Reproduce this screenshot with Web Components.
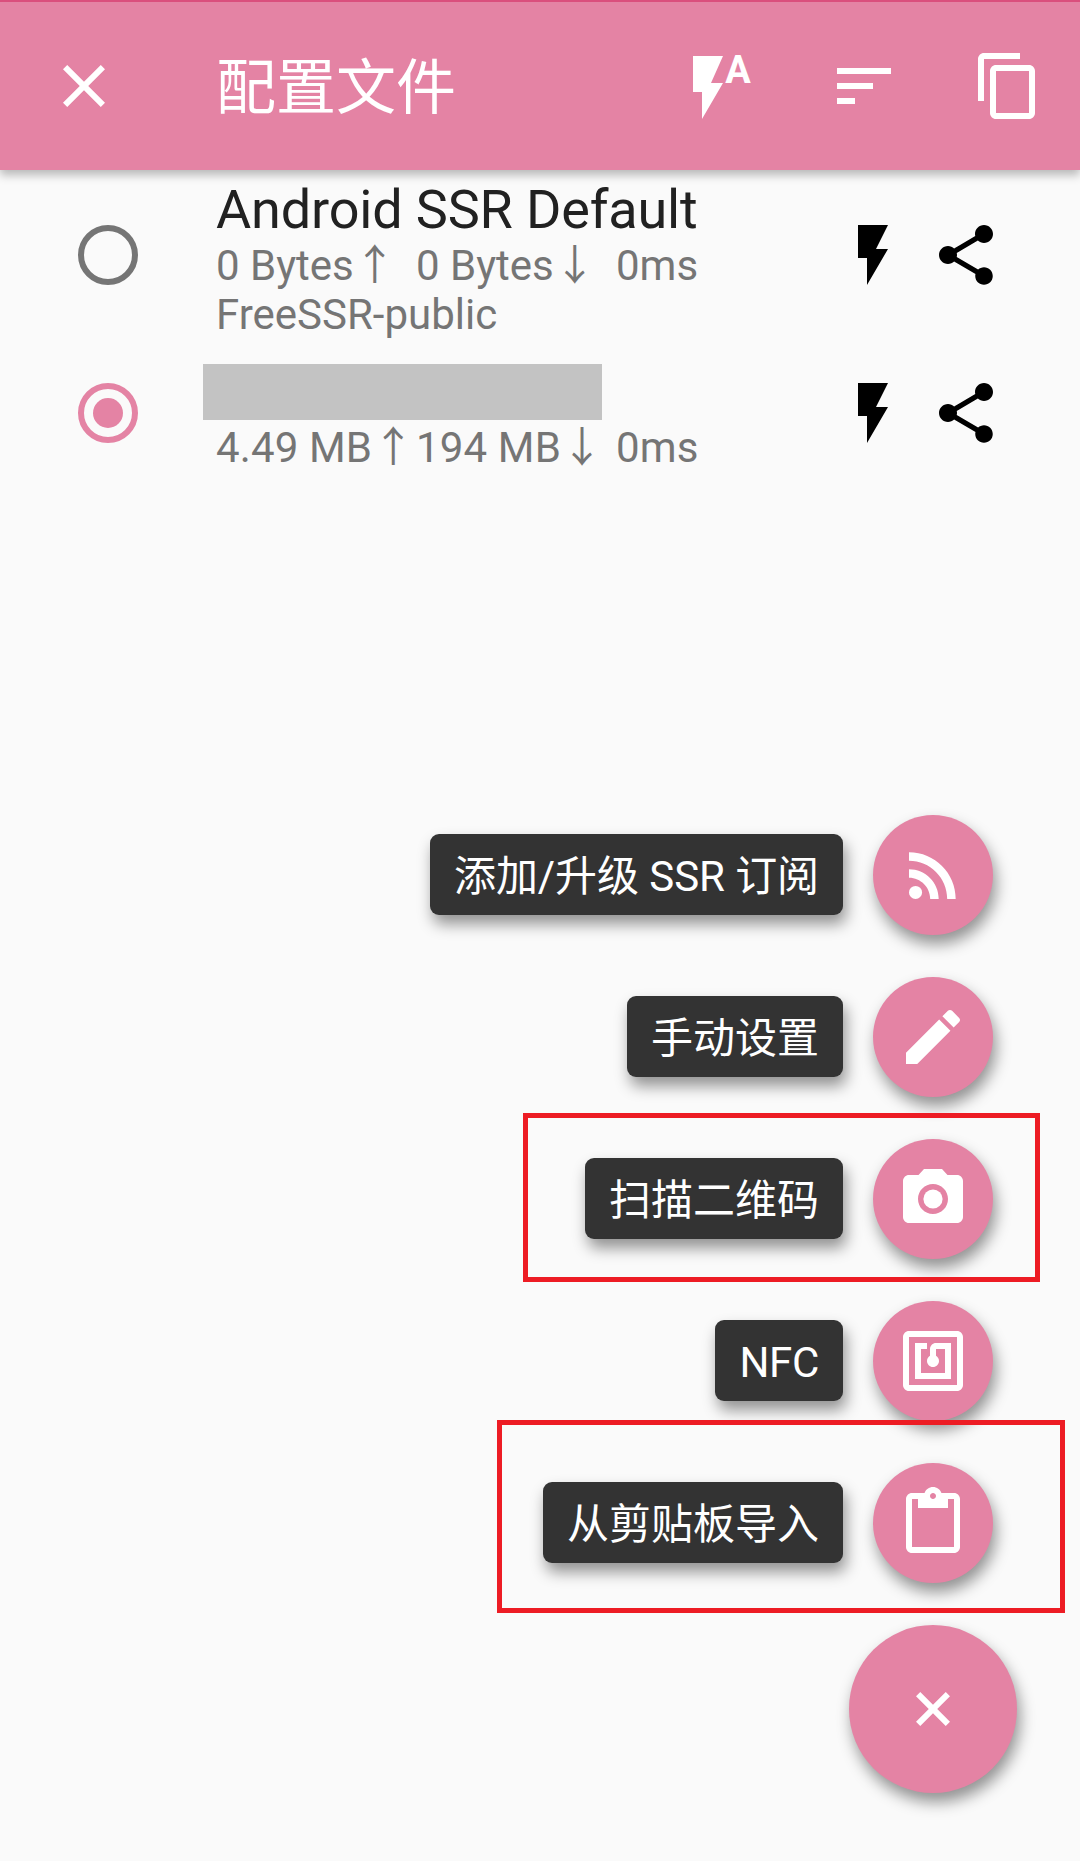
<!DOCTYPE html>
<html lang="zh-CN">
<head>
<meta charset="utf-8">
<title>配置文件</title>
<style>
html, body { margin: 0; padding: 0; }
body { background: #fafafa; font-family: Roboto, "Noto Sans CJK SC", sans-serif; overflow: hidden; }
</style>
</head>
<body>
<profile-screen></profile-screen>
<script>
const ICONS = {
  close: '<path d="M19 6.41 17.59 5 12 10.59 6.41 5 5 6.41 10.59 12 5 17.59 6.41 19 12 13.41 17.59 19 19 17.59 13.41 12z"/>',
  flashAuto: '<path d="M3 2v12h3v9l7-12H9l4-9z"/><text x="18" y="11" text-anchor="middle" font-family="Roboto" font-weight="700" font-size="12.66">A</text>',
  sort: '<path d="M3 18h6v-2H3v2zM3 6v2h18V6H3zm0 7h12v-2H3v2z"/>',
  copy: '<path d="M16 1H4c-1.1 0-2 .9-2 2v14h2V3h12V1zm3 4H8c-1.1 0-2 .9-2 2v14c0 1.1.9 2 2 2h11c1.1 0 2-.9 2-2V7c0-1.1-.9-2-2-2zm0 16H8V7h11v14z"/>',
  flash: '<path d="M7 2v11h3v9l7-12h-4l4-8z"/>',
  share: '<path d="M18 16.08c-.76 0-1.44.3-1.96.77L8.91 12.7c.05-.23.09-.46.09-.7s-.04-.47-.09-.7l7.05-4.11c.54.5 1.25.81 2.04.81 1.66 0 3-1.34 3-3s-1.34-3-3-3-3 1.34-3 3c0 .24.04.47.09.7L8.04 9.81C7.5 9.31 6.79 9 6 9c-1.66 0-3 1.34-3 3s1.34 3 3 3c.79 0 1.5-.31 2.04-.81l7.12 4.16c-.05.21-.08.43-.08.65 0 1.61 1.31 2.92 2.92 2.92s2.92-1.31 2.92-2.92-1.31-2.92-2.92-2.92z"/>',
  rss: '<circle cx="6.18" cy="17.82" r="2.18"/><path d="M4 4.44v2.83c7.03 0 12.73 5.7 12.73 12.73h2.83c0-8.59-6.97-15.56-15.56-15.56zm0 5.66v2.83c3.9 0 7.07 3.17 7.07 7.07h2.83c0-5.47-4.43-9.9-9.9-9.9z"/>',
  edit: '<path d="M3 17.25V21h3.75L17.81 9.94l-3.75-3.75L3 17.25zM20.71 7.04c.39-.39.39-1.02 0-1.41l-2.34-2.34c-.39-.39-1.02-.39-1.41 0l-1.83 1.83 3.75 3.75 1.83-1.83z"/>',
  camera: '<circle cx="12" cy="12" r="3.2"/><path d="M9 2 7.17 4H4c-1.1 0-2 .9-2 2v12c0 1.1.9 2 2 2h16c1.1 0 2-.9 2-2V6c0-1.1-.9-2-2-2h-3.17L15 2H9zm3 15c-2.76 0-5-2.24-5-5s2.24-5 5-5 5 2.24 5 5-2.24 5-5 5z"/>',
  nfc: '<path d="M20 2H4c-1.1 0-2 .9-2 2v16c0 1.1.9 2 2 2h16c1.1 0 2-.9 2-2V4c0-1.1-.9-2-2-2zm0 18H4V4h16v16zM18 6h-5c-1.1 0-2 .9-2 2v2.28c-.6.35-1 .98-1 1.72 0 1.1.9 2 2 2s2-.9 2-2c0-.74-.4-1.38-1-1.72V8h3v8H8V8h2V6H6v12h12V6z"/>',
  paste: '<path d="M19 2h-4.18C14.4.84 13.3 0 12 0c-1.3 0-2.4.84-2.82 2H5c-1.1 0-2 .9-2 2v16c0 1.1.9 2 2 2h14c1.1 0 2-.9 2-2V4c0-1.1-.9-2-2-2zm-7 0c.55 0 1 .45 1 1s-.45 1-1 1-1-.45-1-1 .45-1 1-1zm7 18H5V4h2v3h10V4h2v16z"/>',
  plusTurned: '<path transform="rotate(45 12 12)" d="M11 5h2v6h6v2h-6v6h-2v-6H5v-2h6z"/>'
};

function define(name, render) {
  customElements.define(name, class extends HTMLElement {
    constructor() { super(); this.attachShadow({ mode: 'open' }); }
    connectedCallback() { this.shadowRoot.innerHTML = render(this); }
  });
}

define('md-icon', el => `
  <style>
    :host { display: block; width: 72px; height: 72px; flex: none; }
    svg { display: block; width: 100%; height: 100%; fill: currentColor; overflow: visible; }
  </style>
  <svg viewBox="0 0 24 24" aria-hidden="true">${ICONS[el.getAttribute('name')]}</svg>`);

define('app-toolbar', () => `
  <style>
    :host { display: flex; align-items: center; box-sizing: border-box; height: 170px; padding: 0 36px 0 48px;
      border-top: 2px solid #da4f7d; background: #e483a4; color: #fff; position: relative;
      box-shadow: 0 5px 9px rgba(0,0,0,.27); }
    h1 { margin: 0 0 0 96px; flex: 1; font-size: 60px; line-height: 72px; font-weight: 400; padding-top: 5px; }
    nav { display: flex; gap: 72px; }
  </style>
  <md-icon name="close"></md-icon>
  <h1><slot></slot></h1>
  <nav><md-icon name="flashAuto"></md-icon><md-icon name="sort"></md-icon><md-icon name="copy"></md-icon></nav>`);

define('radio-mark', () => `
  <style>
    :host { display: flex; align-items: center; justify-content: center; box-sizing: border-box; flex: none;
      width: 60px; height: 60px; border: 6px solid #757575; border-radius: 50%; }
    :host([checked]) { border-color: #e483a4; }
    :host([checked]) i { width: 30px; height: 30px; border-radius: 50%; background: #e483a4; }
  </style><i></i>`);

define('profile-row', el => `
  <style>
    :host { display: flex; align-items: center; height: 170px; padding: 0 78px; }
    .text { align-self: flex-start; flex: 1; margin-left: 78px; padding-top: 8px; font-size: 42px; line-height: 49px; color: #757575; }
    :host([masked]) { height: 146px; }
    :host([masked]) .text { padding-top: 20px; }
    :host([masked]) .stats { letter-spacing: .15px; }
    .title { height: 63px; font-size: 54px; line-height: 63px; letter-spacing: -.16px; color: #212121; white-space: nowrap; }
    .mask { display: block; width: 399px; height: 56px; margin-left: -13px; background: #c3c3c3; transform: translateY(4px); }
    .stats { display: grid; grid-template-columns: 200px 200px auto; white-space: nowrap; }
    .actions { display: flex; gap: 21px; color: #000; }
  </style>
  <radio-mark ${el.hasAttribute('masked') ? 'checked' : ''}></radio-mark>
  <div class="text">
    <div class="title">${el.hasAttribute('masked') ? '<span class="mask"></span>' : '<slot name="title"></slot>'}</div>
    <div class="stats"><span>${el.getAttribute('up')}↑</span><span>${el.getAttribute('down')}↓</span><span>0ms</span></div>
    <slot></slot>
  </div>
  <div class="actions"><md-icon name="flash"></md-icon><md-icon name="share"></md-icon></div>`);

define('fab-action', el => `
  <style>
    :host { display: flex; align-items: center; justify-content: flex-end; gap: 30px; height: 120px; }
    .label { box-sizing: border-box; height: 81px; margin-top: -1px; padding: 3px 24px 0; border-radius: 9px; background: #333; color: #fff;
      font-size: 42px; line-height: 79px; letter-spacing: var(--tracking, 0); white-space: nowrap; box-shadow: 3px 9px 15px rgba(0,0,0,.42); }
    .fab { display: flex; align-items: center; justify-content: center; width: 120px; height: 120px; border-radius: 50%;
      background: #e483a4; color: #fff; box-shadow: 3px 9px 15px rgba(0,0,0,.42); }
  </style>
  <span class="label"><slot></slot></span>
  <div class="fab"><md-icon name="${el.getAttribute('icon')}"></md-icon></div>`);

define('fab-menu', () => `
  <style>
    :host { display: flex; flex-direction: column; align-items: flex-end; gap: 42px; padding-right: 87px; }
    .main { display: flex; align-items: center; justify-content: center; width: 168px; height: 168px; margin-right: -24px;
      border-radius: 50%; background: #e483a4; color: #fff; box-shadow: 3px 9px 15px rgba(0,0,0,.42); }
  </style>
  <slot></slot>
  <div class="main"><md-icon name="plusTurned"></md-icon></div>`);

/* Annotation rectangle laid over the menu. */
define('mark-frame', () => `
  <style>:host { display: block; position: absolute; box-sizing: border-box; border: 5px solid #ed1c24; }</style>`);

define('profile-screen', () => `
  <style>
    :host { display: flex; flex-direction: column; position: relative; width: 1080px; height: 1861px; overflow: hidden; background: #fafafa; }
    fab-menu { margin-top: auto; padding-bottom: 68px; }
    [icon="rss"] { --tracking: -.08px; }
    [icon="nfc"] { --tracking: -.3px; }
    .scan { left: 523px; top: 1113px; width: 517px; height: 169px; }
    .clip { left: 497px; top: 1420px; width: 568px; height: 193px; }
  </style>
  <app-toolbar>配置文件</app-toolbar>
  <main>
    <profile-row up="0 Bytes" down="0 Bytes"><span slot="title">Android SSR Default</span>FreeSSR-public</profile-row>
    <profile-row masked up="4.49 MB" down="194 MB"></profile-row>
  </main>
  <fab-menu>
    <fab-action icon="rss">添加/升级 SSR 订阅</fab-action>
    <fab-action icon="edit">手动设置</fab-action>
    <fab-action icon="camera">扫描二维码</fab-action>
    <fab-action icon="nfc">NFC</fab-action>
    <fab-action icon="paste">从剪贴板导入</fab-action>
  </fab-menu>
  <mark-frame class="scan"></mark-frame>
  <mark-frame class="clip"></mark-frame>`);
</script>
</body>
</html>
